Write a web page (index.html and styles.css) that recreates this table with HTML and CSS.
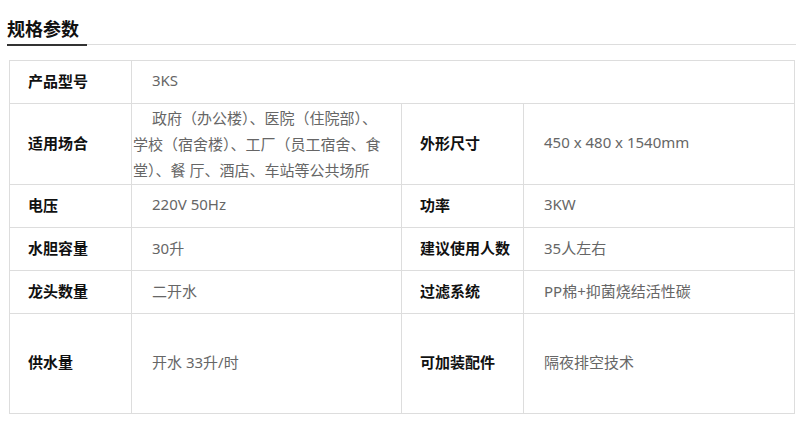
FILE: index.html
```html
<!DOCTYPE html>
<html lang="zh">
<head>
<meta charset="utf-8">
<link rel="stylesheet" href="styles.css">
</head>
<body>
<div class="page">
  <h2 class="title"><span class="title-text">规格参数</span></h2>
  <div class="spec">
    <div class="cell label">产品型号</div>
    <div class="cell value span3"><div class="txt">3KS</div></div>

    <div class="cell label tall">适用场合</div>
    <div class="cell value tall multi-cell"><div class="txt multi">政府（办公楼）、医院（住院部）、<br>学校（宿舍楼）、工厂（员工宿舍、食<br>堂）、餐 厅、酒店、车站等公共场所</div></div>
    <div class="cell label tall">外形尺寸</div>
    <div class="cell value tall"><div class="txt">450 x 480 x 1540mm</div></div>

    <div class="cell label">电压</div>
    <div class="cell value"><div class="txt">220V 50Hz</div></div>
    <div class="cell label">功率</div>
    <div class="cell value"><div class="txt">3KW</div></div>

    <div class="cell label">水胆容量</div>
    <div class="cell value"><div class="txt">30升</div></div>
    <div class="cell label">建议使用人数</div>
    <div class="cell value"><div class="txt">35人左右</div></div>

    <div class="cell label">龙头数量</div>
    <div class="cell value"><div class="txt">二开水</div></div>
    <div class="cell label">过滤系统</div>
    <div class="cell value"><div class="txt">PP棉+抑菌烧结活性碳</div></div>

    <div class="cell label">供水量</div>
    <div class="cell value"><div class="txt">开水 33升/时</div></div>
    <div class="cell label">可加装配件</div>
    <div class="cell value"><div class="txt">隔夜排空技术</div></div>
  </div>
</div>
</body>
</html>
```

FILE: styles.css
```css
html, body {
  margin: 0;
  padding: 0;
  background: #fff;
}
body {
  font-family: "Noto Sans", "Noto Sans CJK SC", sans-serif;
}
.page {
  width: 789px;
  padding: 17px 0 0 7px;
}
.title {
  margin: 0;
  font-size: 18px;
  font-weight: bold;
  line-height: 24px;
  color: #111;
  border-bottom: 1px solid #ddd;
  height: 27px;
}
.title-text {
  display: inline-block;
  height: 27px;
  width: 80px;
  border-bottom: 2px solid #333;
  box-sizing: content-box;
  margin-bottom: -1px;
}
.spec {
  margin: 15px 0 0 2px;
  width: 784px;
  display: grid;
  grid-template-columns: 121px 269px 121px 270px;
  grid-template-rows: 42px 80px 42px 42px 42px 99px;
  gap: 1px;
  background: #ddd;
  border: 1px solid #ddd;
}
.cell {
  background: #fff;
  display: flex;
  align-items: center;
  font-size: 15px;
  padding-bottom: 4px;
}
.label {
  padding-left: 18px;
  font-weight: bold;
  color: #111;
}
.value {
  padding-left: 1px;
  color: #666;
}
.multi-cell {
  padding-bottom: 0;
}
.span3 {
  grid-column: 2 / span 3;
}
.txt {
  text-indent: 19px;
}
.multi {
  line-height: 26px;
  white-space: nowrap;
}
```
